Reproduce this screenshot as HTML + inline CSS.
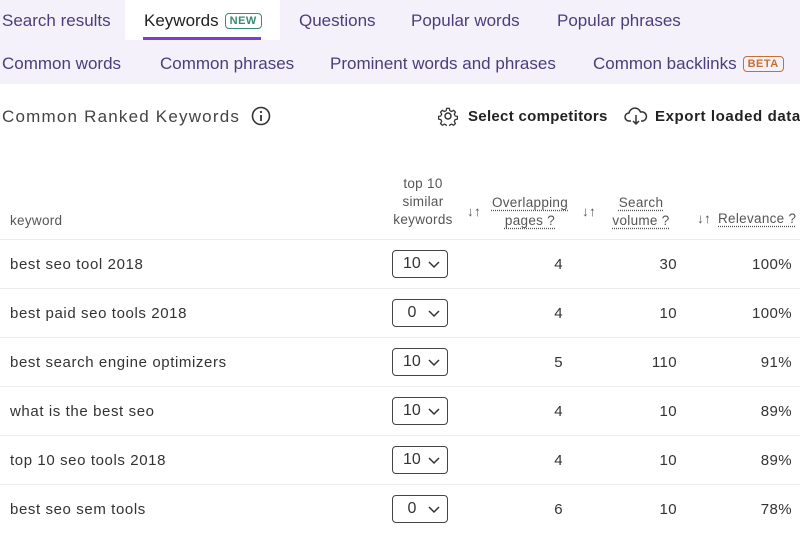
<!DOCTYPE html>
<html><head><meta charset="utf-8"><style>
*{margin:0;padding:0;box-sizing:border-box}
body{width:800px;height:533px;overflow:hidden;background:#fff;font-family:"Liberation Sans",sans-serif;position:relative;color:#333}
.bar{position:absolute;left:0;top:0;width:800px;height:84px;background:#f4f1fb}
.t{position:absolute;font-size:17px;color:#4a3f7a;white-space:nowrap}
.act{position:absolute;left:125px;top:0;width:155px;height:40px;background:#fff}
.ul{position:absolute;left:143px;top:37px;width:118px;height:3px;background:#7b3fd0}
.badge{display:inline-block;font-size:11px;font-weight:bold;border:1.5px solid;border-radius:4px;padding:1px 4px;vertical-align:2px;margin-left:6px;letter-spacing:.5px}
.a{position:absolute;white-space:nowrap}
.h{font-size:13.5px;color:#555;text-align:center;line-height:18px;letter-spacing:.3px}
.d{text-decoration:underline dotted;text-underline-offset:3px}
.row{position:absolute;left:0;width:800px;height:49px;border-top:1px solid #ececec}
.kw{position:absolute;left:10px;top:16px;font-size:15px;color:#333;letter-spacing:.6px}
.sel{position:absolute;left:392px;top:10px;width:56px;height:28px;border:1.5px solid #444;border-radius:4px;font-size:16px;padding:4px 0 0 10px;color:#333}
.sel svg{position:absolute;right:7px;top:10px}
.n{position:absolute;top:16px;font-size:15px;text-align:right;color:#333;letter-spacing:.4px}
</style></head><body>
<div class="bar"></div>
<div class="act"></div>
<div class="ul"></div>
<div class="t" style="left:2px;top:11px">Search results</div>
<div class="t" style="left:144px;top:11px;color:#222">Keywords<span class="badge" style="color:#3a8a6e;border-color:#3a8a6e">NEW</span></div>
<div class="t" style="left:299px;top:11px">Questions</div>
<div class="t" style="left:411px;top:11px">Popular words</div>
<div class="t" style="left:557px;top:11px">Popular phrases</div>
<div class="t" style="left:2px;top:54px">Common words</div>
<div class="t" style="left:160px;top:54px">Common phrases</div>
<div class="t" style="left:330px;top:54px">Prominent words and phrases</div>
<div class="t" style="left:593px;top:54px">Common backlinks<span class="badge" style="color:#c9702f;border-color:#c9702f">BETA</span></div>

<div class="a" style="left:2px;top:107px;font-size:17px;color:#444;letter-spacing:1.2px">Common Ranked Keywords</div>
<svg class="a" style="left:251px;top:106px" width="20" height="20" viewBox="0 0 20 20"><circle cx="10" cy="10" r="8.5" fill="none" stroke="#333" stroke-width="1.6"/><circle cx="10" cy="6" r="1.1" fill="#333"/><path d="M10 9v6" stroke="#333" stroke-width="1.8"/></svg>
<svg class="a" style="left:438px;top:106px" width="20" height="20" viewBox="0 0 20 20"><circle cx="10" cy="10" r="3" fill="none" stroke="#333" stroke-width="1.5"/><path d="M8.5 1.5h3l.5 2.5 2 1 2.3-1.3 2 2-1.3 2.3 1 2 2.5.5v3l-2.5.5-1 2 1.3 2.3-2 2-2.3-1.3-2 1-.5 2.5h-3l-.5-2.5-2-1-2.3 1.3-2-2 1.3-2.3-1-2-2.5-.5v-3l2.5-.5 1-2-1.3-2.3 2-2 2.3 1.3 2-1z" fill="none" stroke="#333" stroke-width="1.4" transform="scale(.9) translate(1.1 1.1)"/></svg>
<div class="a" style="left:468px;top:108px;font-size:15px;font-weight:bold;color:#222;letter-spacing:.3px">Select competitors</div>
<svg class="a" style="left:624px;top:106px" width="24" height="20" viewBox="0 0 24 20"><path d="M7 15H5a4 4 0 0 1 0-8 6 6 0 0 1 11.5-1A4.5 4.5 0 0 1 19 15h-2" fill="none" stroke="#333" stroke-width="1.5"/><path d="M12 9v9M9 15l3 3 3-3" fill="none" stroke="#333" stroke-width="1.5"/></svg>
<div class="a" style="left:655px;top:108px;font-size:15px;font-weight:bold;color:#222;letter-spacing:.6px">Export loaded data</div>

<div class="a h" style="left:10px;top:212px">keyword</div>
<div class="a h" style="left:384px;top:175px;width:78px">top 10<br>similar<br>keywords</div>
<div class="a h" style="left:467px;top:203px">↓↑</div>
<div class="a h" style="left:486px;top:194px;width:88px"><span class="d">Overlapping</span><br><span class="d">pages ?</span></div>
<div class="a h" style="left:582px;top:203px">↓↑</div>
<div class="a h" style="left:604px;top:194px;width:74px"><span class="d">Search</span><br><span class="d">volume ?</span></div>
<div class="a h" style="left:697px;top:210px">↓↑</div>
<div class="a h" style="left:718px;top:210px"><span class="d">Relevance ?</span></div>

<div class="row" style="top:239px"><div class="kw">best seo tool 2018</div><div class="sel">10<svg width="12" height="8"><path d="M1 1l5 5 5-5" fill="none" stroke="#333" stroke-width="1.5"/></svg></div><div class="n" style="right:237px">4</div><div class="n" style="right:123px">30</div><div class="n" style="right:8px">100%</div></div>
<div class="row" style="top:288px"><div class="kw">best paid seo tools 2018</div><div class="sel">&nbsp;0<svg width="12" height="8"><path d="M1 1l5 5 5-5" fill="none" stroke="#333" stroke-width="1.5"/></svg></div><div class="n" style="right:237px">4</div><div class="n" style="right:123px">10</div><div class="n" style="right:8px">100%</div></div>
<div class="row" style="top:337px"><div class="kw">best search engine optimizers</div><div class="sel">10<svg width="12" height="8"><path d="M1 1l5 5 5-5" fill="none" stroke="#333" stroke-width="1.5"/></svg></div><div class="n" style="right:237px">5</div><div class="n" style="right:123px">110</div><div class="n" style="right:8px">91%</div></div>
<div class="row" style="top:386px"><div class="kw">what is the best seo</div><div class="sel">10<svg width="12" height="8"><path d="M1 1l5 5 5-5" fill="none" stroke="#333" stroke-width="1.5"/></svg></div><div class="n" style="right:237px">4</div><div class="n" style="right:123px">10</div><div class="n" style="right:8px">89%</div></div>
<div class="row" style="top:435px"><div class="kw">top 10 seo tools 2018</div><div class="sel">10<svg width="12" height="8"><path d="M1 1l5 5 5-5" fill="none" stroke="#333" stroke-width="1.5"/></svg></div><div class="n" style="right:237px">4</div><div class="n" style="right:123px">10</div><div class="n" style="right:8px">89%</div></div>
<div class="row" style="top:484px"><div class="kw">best seo sem tools</div><div class="sel">&nbsp;0<svg width="12" height="8"><path d="M1 1l5 5 5-5" fill="none" stroke="#333" stroke-width="1.5"/></svg></div><div class="n" style="right:237px">6</div><div class="n" style="right:123px">10</div><div class="n" style="right:8px">78%</div></div>
</body></html>
